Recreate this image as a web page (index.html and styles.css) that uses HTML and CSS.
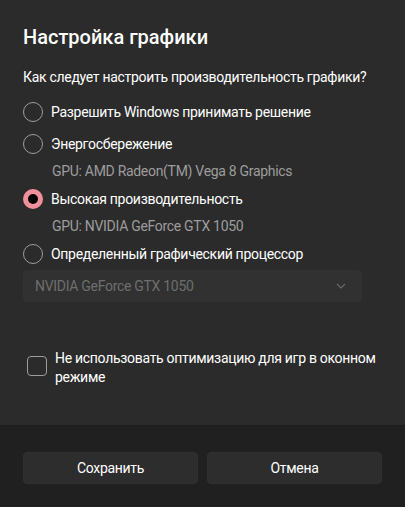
FILE: index.html
```html
<!DOCTYPE html>
<html lang="ru">
<head>
<meta charset="utf-8">
<link rel="stylesheet" href="styles.css">
</head>
<body>
<div class="dialog">
  <div class="content">
    <h1 class="title">Настройка графики</h1>
    <p class="question">Как следует настроить производительность графики?</p>
    <div class="options">
      <div class="radio-row"><span class="radio"></span><span class="label">Разрешить Windows принимать решение</span></div>
      <div class="radio-row"><span class="radio"></span><span class="label">Энергосбережение</span></div>
      <div class="gpu">GPU: AMD Radeon(TM) Vega 8 Graphics</div>
      <div class="radio-row"><span class="radio checked"></span><span class="label">Высокая производительность</span></div>
      <div class="gpu">GPU: NVIDIA GeForce GTX 1050</div>
      <div class="radio-row"><span class="radio"></span><span class="label">Определенный графический процессор</span></div>
    </div>
    <div class="select">
      <span>NVIDIA GeForce GTX 1050</span>
      <svg class="chev" width="10" height="6" viewBox="0 0 10 6"><path d="M1 1 L5 5 L9 1" fill="none" stroke="#6a6a6a" stroke-width="1.2"/></svg>
    </div>
    <div class="check-row">
      <span class="checkbox"></span>
      <span class="check-label">Не использовать оптимизацию для игр в оконном режиме</span>
    </div>
  </div>
  <div class="footer">
    <button class="btn">Сохранить</button>
    <button class="btn">Отмена</button>
  </div>
</div>
</body>
</html>
```
FILE: styles.css
```css
* { box-sizing: border-box; }
html, body { margin: 0; padding: 0; background: #2b2b2b; }
body { font-family: Roboto, "Noto Sans", sans-serif; color: #ffffff; letter-spacing: -0.3px; }
.dialog { width: 405px; height: 507px; display: flex; flex-direction: column; background: #2b2b2b; }
.content { flex: 1; padding: 23px 23px 0 23px; }
.title { margin: 0; font-size: 20px; font-weight: 500; line-height: 28px; letter-spacing: 0; }
.question { margin: 16px 0 0 0; font-size: 14px; line-height: 20px; }
.options { margin-top: 9px; display: flex; flex-direction: column; }
.radio-row { display: flex; align-items: center; height: 32px; }
.radio { width: 20px; height: 20px; border-radius: 50%; border: 1px solid #9d9d9d; margin-right: 8px; flex: none; }
.radio.checked { border: 5px solid #f0909a; background: #000; }
.label { font-size: 14px; }
.gpu { padding: 1px 0 0 29px; font-size: 14px; color: #9d9d9d; height: 23px; line-height: 20px; }
.select { width: 339px; height: 32px; background: #313131; border-radius: 4px; display: flex; align-items: center; justify-content: space-between; padding: 0 16px 0 12px; font-size: 14px; color: #6e6e6e; }
.chev { flex: none; }
.check-row { margin-top: 47px; display: flex; align-items: flex-start; padding-left: 4px; }
.checkbox { width: 20px; height: 20px; border: 1px solid #9d9d9d; border-radius: 4px; margin-top: 7px; margin-right: 8px; flex: none; }
.check-label { font-size: 14px; line-height: 19px; }
.footer { height: 82px; background: #202020; border-top: 1px solid #1d1d1d; display: flex; gap: 9px; padding: 26px 23px 0 23px; }
.btn { flex: 1; height: 32px; background: #2d2d2d; border: 1px solid #303030; border-radius: 4px; color: #fff; font-family: inherit; font-size: 14px; letter-spacing: -0.3px; }
```
